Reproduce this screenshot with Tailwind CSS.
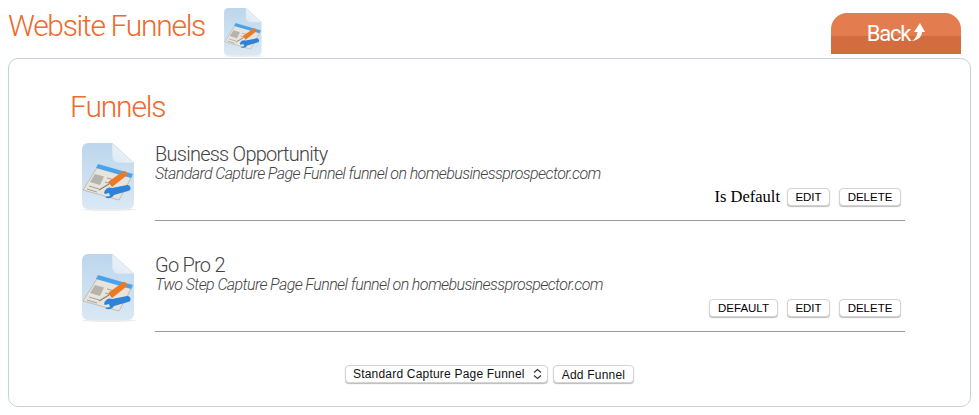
<!DOCTYPE html>
<html lang="en">
<head>
    <meta charset="UTF-8">
    <title>Website Funnels</title>
    <script src="https://cdn.jsdelivr.net/npm/@tailwindcss/browser@4"></script>
</head>
<body class="bg-white font-['Roboto',sans-serif] font-light overflow-hidden">

    <!-- shared page icon -->
    <svg class="absolute w-0 h-0">
        <defs>
            <linearGradient id="sheet" x1="0" y1="0" x2="0" y2="1">
                <stop offset="0" stop-color="#bdd6ec"/>
                <stop offset="1" stop-color="#dae8f4"/>
            </linearGradient>
            <linearGradient id="fold" x1="0" y1="1" x2="1" y2="0">
                <stop offset="0" stop-color="#dbe8f4"/>
                <stop offset="1" stop-color="#f6f9fc"/>
            </linearGradient>
        </defs>
        <symbol id="page-icon" viewBox="0 0 54 68">
            <ellipse cx="27" cy="66.500" rx="27" ry="1.500" fill="#ececec"/>
            <path d="M6 0H30L52 20V60a6 6 0 0 1-6 6H6a6 6 0 0 1-6-6V6a6 6 0 0 1 6-6z" fill="url(#sheet)"/>
            <path d="M30 0L52 20H36a6 6 0 0 1-6-6z" fill="url(#fold)" stroke="#c3d8ea" stroke-width="0.6"/>
            <!-- newspaper -->
            <path d="M16 23L50 33L37 57L1 47z" fill="#e6e4dd" stroke="#a5a49c" stroke-width="0.6"/>
            <path d="M16 21L51 31L49 35L14 25z" fill="#4aa3ea"/>
            <path d="M13 31L22 33.500L18 42L8 39z" fill="#b5b3aa"/>
            <path d="M7 43L17 46M5 46L15 49M25 35L33 37M23 39L29 41" stroke="#a3a299" stroke-width="1" fill="none"/>
            <!-- pencil -->
            <path d="M17 47L27 41" stroke="#8a8172" stroke-width="1.200"/>
            <path d="M26 39L40 29a2.800 2.800 0 0 1 4 4L30 44z" fill="#ec7a22"/>
            <!-- wrench -->
            <path d="M22 50a6 6 0 0 1 8-5L45 42a3 3 0 0 1 1 6L32 52a6 6 0 0 1-9 2l5-1-1-3-4 1z" fill="#2f83d6"/>
        </symbol>
    </svg>

    <header class="relative flex h-[58px] pl-2">
        <h1 class="mt-[7px] text-[30px] leading-[38px] tracking-[-1.300px] text-[#ef6a2c]">Website Funnels</h1>
        <svg class="ml-[19px] mt-[7px] w-[39px] h-[51px]"><use href="#page-icon"/></svg>
        <a class="absolute left-[831px] top-[13px] flex w-[130px] h-[41px] items-center justify-center rounded-t-[16px] bg-[linear-gradient(#e37d50_0,#e37d50_55%,#d36c3f_55%,#d36c3f_100%)] text-[22px] font-normal tracking-[-1.200px] text-white">
            Back
            <svg class="ml-[1px] mb-[4px] w-[14px] h-[18px]" viewBox="0 0 14 18"><path d="M9 0L14 9H11C11 13 8 17 1 18C5 15 6.500 12 6.500 9H3z" fill="#fff"/></svg>
        </a>
    </header>

    <main class="mx-2 w-[963px] h-[349px] rounded-[10px] border border-[#c3d3da] pt-[29px]">
        <h2 class="ml-[61px] text-[30px] leading-[38px] tracking-[-1.150px] text-[#ef6a2c]">Funnels</h2>

        <div class="mt-[12px] flex h-[83px] pl-[73px] pr-[65px]">
            <svg class="mt-[5px] w-[54px] h-[68px] shrink-0"><use href="#page-icon"/></svg>
            <div class="ml-[19px] flex-1 border-b border-[#9a9a9a]">
                <div class="mt-[5px] text-[20px] leading-[22px] tracking-[-0.750px] text-[#444]">Business Opportunity</div>
                <div class="mt-px text-[16px] leading-[16px] tracking-[-0.600px] italic text-[#444]">Standard Capture Page Funnel funnel on homebusinessprospector.com</div>
                <div class="mt-[6px] flex h-[18px] items-center justify-end gap-[9px] pr-[4px]">
                    <span class="mr-[-2px] font-['Liberation_Serif',serif] text-[16.500px] font-normal text-black">Is Default</span>
                    <button class="h-[18px] w-[43px] rounded-[4px] border border-[#d4d4d4] bg-white font-['Liberation_Sans',sans-serif] text-[11.500px] font-normal text-black shadow-[0_1px_1px_#bbb]">EDIT</button>
                    <button class="h-[18px] w-[62px] rounded-[4px] border border-[#d4d4d4] bg-white font-['Liberation_Sans',sans-serif] text-[11.500px] font-normal text-black shadow-[0_1px_1px_#bbb]">DELETE</button>
                </div>
            </div>
        </div>

        <div class="mt-[28px] flex h-[83px] pl-[73px] pr-[65px]">
            <svg class="mt-[5px] w-[54px] h-[68px] shrink-0"><use href="#page-icon"/></svg>
            <div class="ml-[19px] flex-1 border-b border-[#9a9a9a]">
                <div class="mt-[5px] text-[20px] leading-[22px] tracking-[-0.750px] text-[#444]">Go Pro 2</div>
                <div class="mt-px text-[16px] leading-[16px] tracking-[-0.600px] italic text-[#444]">Two Step Capture Page Funnel funnel on homebusinessprospector.com</div>
                <div class="mt-[6px] flex h-[18px] items-center justify-end gap-[9px] pr-[4px]">
                    <button class="h-[18px] w-[69px] rounded-[4px] border border-[#d4d4d4] bg-white font-['Liberation_Sans',sans-serif] text-[11.500px] font-normal text-black shadow-[0_1px_1px_#bbb]">DEFAULT</button>
                    <button class="h-[18px] w-[43px] rounded-[4px] border border-[#d4d4d4] bg-white font-['Liberation_Sans',sans-serif] text-[11.500px] font-normal text-black shadow-[0_1px_1px_#bbb]">EDIT</button>
                    <button class="h-[18px] w-[62px] rounded-[4px] border border-[#d4d4d4] bg-white font-['Liberation_Sans',sans-serif] text-[11.500px] font-normal text-black shadow-[0_1px_1px_#bbb]">DELETE</button>
                </div>
            </div>
        </div>

        <div class="mt-[33px] ml-[336px] flex items-center gap-[5px] font-['Liberation_Sans',sans-serif] text-[12px] tracking-[0.2px] font-normal text-[#111]">
            <div class="flex h-[18px] w-[203px] items-center justify-between rounded-[4px] border border-[#d4d4d4] bg-white pl-[7px] pr-[5px] shadow-[0_1px_1px_#bbb]">
                <span>Standard Capture Page Funnel</span>
                <svg class="w-[9px] h-[12px]" viewBox="0 0 9 12" fill="none" stroke="#333" stroke-width="1.200"><path d="M1 4.500L4.500 1.500L8 4.500M1 7.500L4.500 10.500L8 7.500"/></svg>
            </div>
            <button class="h-[18px] w-[81px] rounded-[4px] border border-[#d4d4d4] bg-white shadow-[0_1px_1px_#bbb]">Add Funnel</button>
        </div>
    </main>

</body>
</html>
